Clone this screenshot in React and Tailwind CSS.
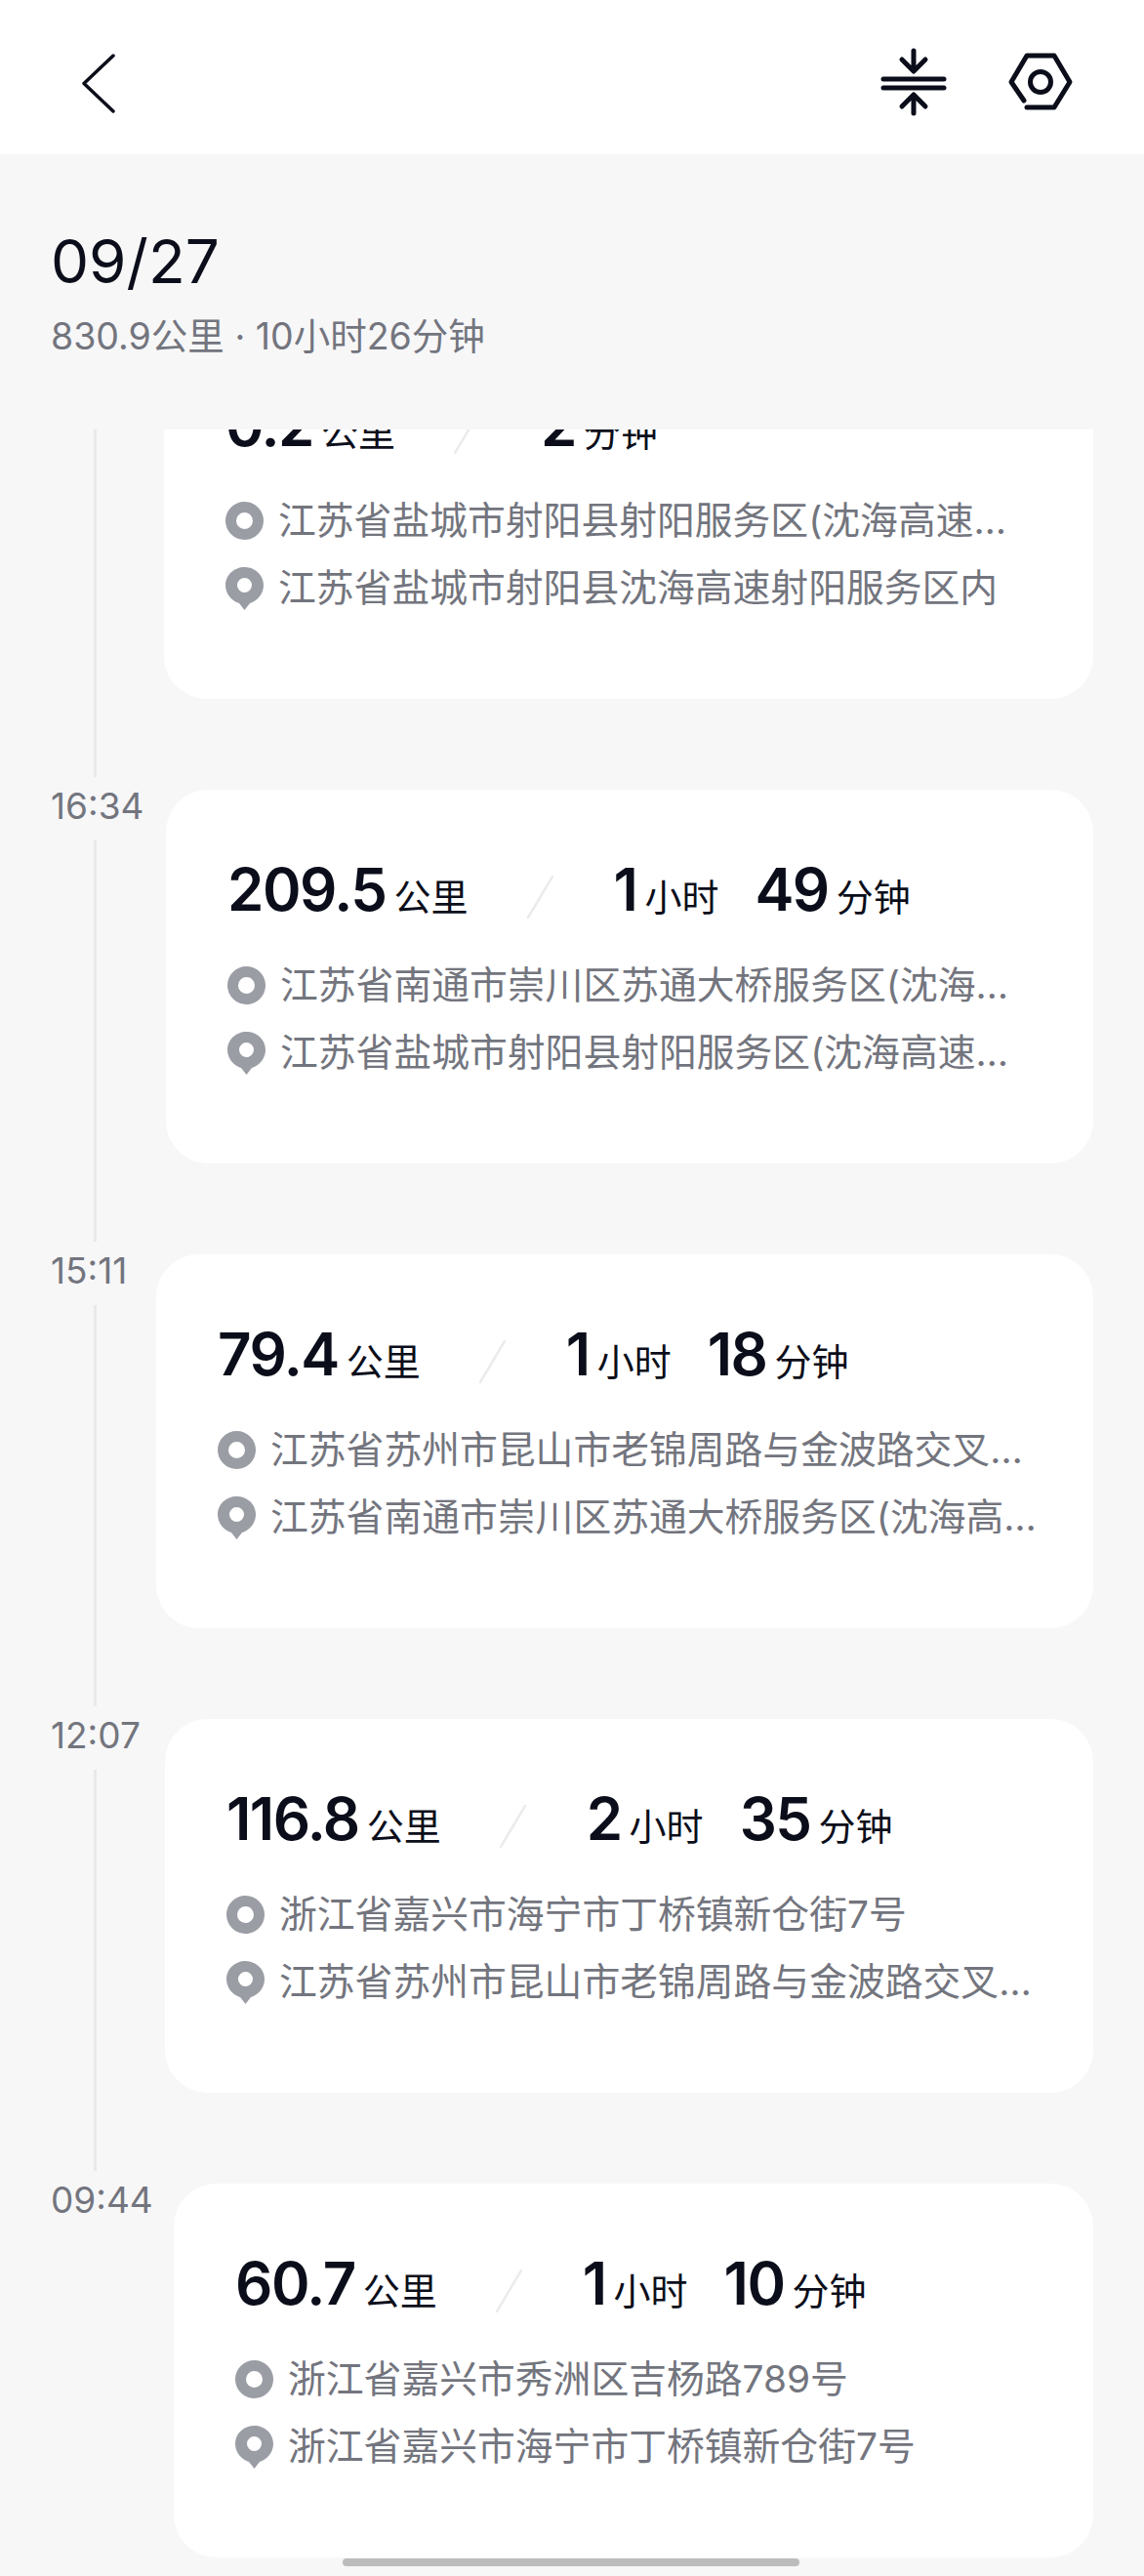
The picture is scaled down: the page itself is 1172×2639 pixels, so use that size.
const trips = [
  {
    col: 'w-[89px]',
    km: '0.2',
    parts: [['2', '分钟']],
    from: '江苏省盐城市射阳县射阳服务区(沈海高速公路南行方向)',
    to: '江苏省盐城市射阳县沈海高速射阳服务区内',
  },
  {
    col: 'w-[91px]',
    time: '16:34',
    km: '209.5',
    parts: [['1', '小时'], ['49', '分钟']],
    from: '江苏省南通市崇川区苏通大桥服务区(沈海高速公路南行方向)',
    to: '江苏省盐城市射阳县射阳服务区(沈海高速公路南行方向)',
  },
  {
    col: 'w-[81px]',
    time: '15:11',
    km: '79.4',
    parts: [['1', '小时'], ['18', '分钟']],
    from: '江苏省苏州市昆山市老锦周路与金波路交叉口东南方向',
    to: '江苏省南通市崇川区苏通大桥服务区(沈海高速公路南行方向)',
  },
  {
    col: 'w-[90px]',
    time: '12:07',
    km: '116.8',
    parts: [['2', '小时'], ['35', '分钟']],
    from: '浙江省嘉兴市海宁市丁桥镇新仓街7号',
    to: '江苏省苏州市昆山市老锦周路与金波路交叉口东南方向',
  },
  {
    col: 'w-[99px]',
    time: '09:44',
    km: '60.7',
    parts: [['1', '小时'], ['10', '分钟']],
    from: '浙江省嘉兴市秀洲区吉杨路789号',
    to: '浙江省嘉兴市海宁市丁桥镇新仓街7号',
  },
];

function BackIcon() {
  return (
    <svg width="40" height="64" viewBox="0 0 40 64" fill="none" stroke="#0b0e1a" strokeWidth="3.5" strokeLinecap="round" strokeLinejoin="round">
      <path d="M38 5 L8 33.5 L38 62" />
    </svg>
  );
}

function CompressIcon() {
  return (
    <svg width="68" height="70" viewBox="0 0 68 70" fill="none" stroke="#0b0e1a" strokeWidth="5" strokeLinecap="round" strokeLinejoin="round">
      <path d="M34 3 V23 M22 12 L34 24 L46 12" />
      <path d="M3 32 H65 M3 41 H65" />
      <path d="M34 49 V67 M22 60 L34 48 L46 60" />
    </svg>
  );
}

function NutIcon() {
  return (
    <svg width="66" height="60" viewBox="0 0 66 60" fill="none" stroke="#0b0e1a" strokeWidth="5" strokeLinecap="round" strokeLinejoin="round">
      <path d="M16 49 L3 30 L19 3 H47 L63 30 L47 56 H19" />
      <circle cx="33" cy="30" r="10.5" />
    </svg>
  );
}

function StartDot() {
  return (
    <svg width="39" height="39" viewBox="0 0 39 39" className="shrink-0">
      <path
        fillRule="evenodd"
        fill="#9b9da5"
        d="M19.5 0a19.5 19.5 0 1 0 0 39a19.5 19.5 0 1 0 0-39z M19.5 11a8.5 8.5 0 1 1 0 17a8.5 8.5 0 1 1 0-17z"
      />
    </svg>
  );
}

function EndPin() {
  return (
    <svg width="39" height="44" viewBox="0 0 39 44" className="shrink-0">
      <path
        fillRule="evenodd"
        fill="#9b9da5"
        d="M19.5 0C30 0 39 8 39 18.5C39 28 32 35 25 37L19.5 44L14 37C7 35 0 28 0 18.5C0 8 9 0 19.5 0z M19.5 11a7.5 7.5 0 1 0 0 15a7.5 7.5 0 1 0 0-15z"
      />
    </svg>
  );
}

function Slash() {
  return (
    <svg width="27" height="44" viewBox="0 0 27 44" className="shrink-0 ml-[23px] mr-[62px] self-center" fill="none" stroke="#ebebed" strokeWidth="2.5" strokeLinecap="round">
      <path d="M26 1 L1 43" />
    </svg>
  );
}

function Metric({ value, unit }) {
  return (
    <span className="flex items-baseline mr-[37px]">
      <span className="text-[60px] leading-[72px] font-semibold text-[#0b0e1a] tracking-[-1.5px]">{value}</span>
      <span className="text-[38px] leading-[72px] text-[#0b0e1a] ml-[8px]">{unit}</span>
    </span>
  );
}

function TripCard({ trip }) {
  return (
    <div className="flex-1 min-w-0 h-[383px] ml-[27px] bg-white rounded-[44px] pt-[74px] pl-[63px] pr-[56px]">
      <div className="flex items-end h-[72px]">
        <Metric value={trip.km} unit="公里" />
        <Slash />
        {trip.parts.map(([value, unit]) => (
          <Metric key={unit} value={value} unit={unit} />
        ))}
      </div>
      <div className="mt-[20px]">
        <div className="flex items-center h-[69px] gap-[15px]">
          <StartDot />
          <span className="truncate text-[38.8px] text-[#73757e]">{trip.from}</span>
        </div>
        <div className="flex items-center h-[69px] gap-[15px]">
          <EndPin />
          <span className="truncate text-[38.8px] text-[#73757e]">{trip.to}</span>
        </div>
      </div>
    </div>
  );
}

export default function App() {
  return (
    <div
      className="relative w-[1172px] h-[2639px] overflow-hidden bg-[#f7f7f8] flex flex-col"
      style={{ fontFamily: 'Inter, "Noto Sans CJK SC", sans-serif' }}
    >
      <header className="h-[158px] shrink-0 bg-white flex items-center pt-[10px] pl-[78px] pr-[73px]">
        <BackIcon />
        <div className="ml-auto flex items-center gap-[63px]">
          <CompressIcon />
          <NutIcon />
        </div>
      </header>

      <section className="h-[282px] shrink-0 pl-[52px] pt-[72px]">
        <h1 className="text-[62px] leading-[76px] font-normal text-[#0b0e1a]">09/27</h1>
        <p className="text-[37.5px] leading-[50px] mt-[14px] text-[#73757e]">830.9公里 · 10小时26分钟</p>
      </section>

      <div className="flex-1 min-h-0 overflow-hidden px-[52px]">
        <div className="-mt-[107px]">
          {trips.map((trip, i) => (
            <div key={i} className={`flex ${i < trips.length - 1 ? 'pb-[93px]' : ''}`}>
              <div className={`shrink-0 flex flex-col ${trip.col} ${i < trips.length - 1 ? '-mb-[80px]' : ''}`}>
                {trip.time && <span className="text-[37px] leading-[34px] whitespace-nowrap text-[#73757e]">{trip.time}</span>}
                {i < trips.length - 1 && <div className="flex-1 w-[3px] ml-[44px] mt-[18px] bg-[#e9e9eb]" />}
              </div>
              <TripCard trip={trip} />
            </div>
          ))}
        </div>
      </div>

      <div className="absolute bottom-[10px] left-[351px] w-[468px] h-[8px] rounded-full bg-[#bcbcbc]" />
    </div>
  );
}
